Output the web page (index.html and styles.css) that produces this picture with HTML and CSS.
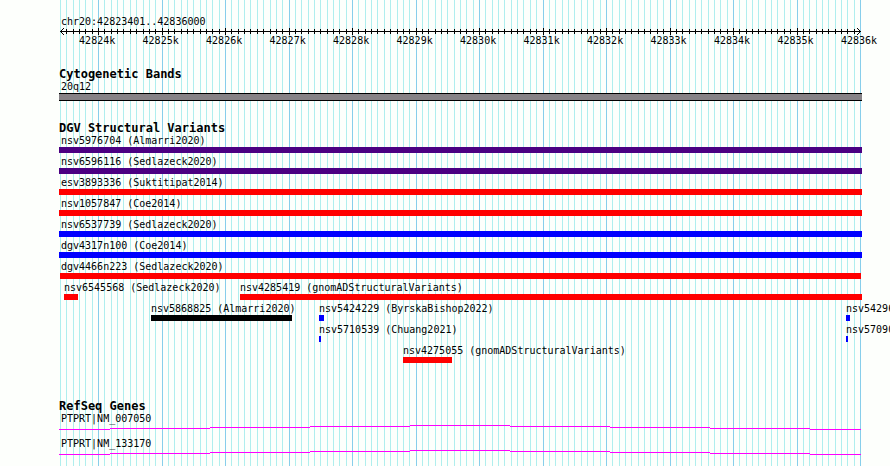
FILE: index.html
```
<!DOCTYPE html>
<html lang="en">

<head>
    <meta charset="UTF-8">
    <meta name="viewport" content="width=device-width, initial-scale=1.0">
    <title>chr20:42823401..42836000</title>
    <link rel="stylesheet" href="styles.css">
</head>

<body>
    <main class="plot">
        <svg class="grid" id="grid" aria-hidden="true"></svg>

        <header class="ruler">
            <p class="region">chr20:42823401..42836000</p>
            <svg class="axis" id="axis" aria-hidden="true">
                <rect x="0" y="3" width="100%" height="1" />
                <path class="arrow" d="M4 0L0.5 3.5L4 7" />
                <svg x="100%" overflow="visible">
                    <path class="arrow" d="M-3 0L0.5 3.5L-3 7" />
                </svg>
            </svg>
            <div class="scale" id="scale"></div>
        </header>

        <section class="track">
            <h2>Cytogenetic Bands</h2>
            <div class="row">
                <span class="label">20q12</span>
                <span class="bar band"></span>
            </div>
        </section>

        <section class="track variants">
            <h2>DGV Structural Variants</h2>
            <div class="row">
                <span class="label">nsv5976704 (Almarri2020)</span>
                <span class="bar complex"></span>
            </div>
            <div class="row">
                <span class="label">nsv6596116 (Sedlazeck2020)</span>
                <span class="bar complex"></span>
            </div>
            <div class="row">
                <span class="label">esv3893336 (Suktitipat2014)</span>
                <span class="bar loss"></span>
            </div>
            <div class="row">
                <span class="label">nsv1057847 (Coe2014)</span>
                <span class="bar loss"></span>
            </div>
            <div class="row">
                <span class="label">nsv6537739 (Sedlazeck2020)</span>
                <span class="bar gain"></span>
            </div>
            <div class="row">
                <span class="label">dgv4317n100 (Coe2014)</span>
                <span class="bar gain"></span>
            </div>
            <div class="row">
                <span class="label">dgv4466n223 (Sedlazeck2020)</span>
                <span class="bar loss" style="--start: 0%; --size: 100.125%"></span>
            </div>
            <div class="row">
                <span class="label" style="--start: 0.5%">nsv6545568 (Sedlazeck2020)</span>
                <span class="bar loss" style="--start: 0.5%; --size: 1.75%"></span>
                <span class="label" style="--start: 22.5%">nsv4285419 (gnomADStructuralVariants)</span>
                <span class="bar loss" style="--start: 22.5%; --size: 77.75%"></span>
            </div>
            <div class="row">
                <span class="label" style="--start: 11.375%">nsv5868825 (Almarri2020)</span>
                <span class="bar inversion" style="--start: 11.375%; --size: 17.625%"></span>
                <span class="label" style="--start: 32.375%">nsv5424229 (ByrskaBishop2022)</span>
                <span class="bar gain" style="--start: 32.375%; --size: 0.625%"></span>
                <span class="label" style="--start: 98.25%">nsv54296</span>
                <span class="bar gain" style="--start: 98.25%; --size: 0.5%"></span>
            </div>
            <div class="row">
                <span class="label" style="--start: 32.375%">nsv5710539 (Chuang2021)</span>
                <span class="bar gain" style="--start: 32.375%; --size: 0.25%"></span>
                <span class="label" style="--start: 98.25%">nsv57090</span>
                <span class="bar gain" style="--start: 98.25%; --size: 0.25%"></span>
            </div>
            <div class="row">
                <span class="label" style="--start: 42.875%">nsv4275055 (gnomADStructuralVariants)</span>
                <span class="bar loss" style="--start: 42.875%; --size: 6.125%"></span>
            </div>
        </section>

        <section class="track genes">
            <h2>RefSeq Genes</h2>
            <div class="row">
                <span class="label">PTPRT|NM_007050</span>
                <svg class="bar intron" viewBox="0 0 802 5" preserveAspectRatio="none" aria-hidden="true">
                    <path d="M0 4h51v1h-51zM51 3h100v1h-100zM151 2h100v1h-100zM251 1h100v1h-100zM351 0h100v1h-100zM451 1h100v1h-100zM551 2h100v1h-100zM651 3h100v1h-100zM751 4h51v1h-51z" />
                </svg>
            </div>
            <div class="row">
                <span class="label">PTPRT|NM_133170</span>
                <svg class="bar intron" viewBox="0 0 802 5" preserveAspectRatio="none" aria-hidden="true">
                    <path d="M0 4h51v1h-51zM51 3h100v1h-100zM151 2h100v1h-100zM251 1h100v1h-100zM351 0h100v1h-100zM451 1h100v1h-100zM551 2h100v1h-100zM651 3h100v1h-100zM751 4h51v1h-51z" />
                </svg>
            </div>
        </section>
    </main>
    <script>
        var start = 42823400;
        var end = 42836000;
        var grid = document.getElementById("grid");
        var axis = document.getElementById("axis");
        var scale = document.getElementById("scale");

        function addRect(svg, x, y, height, name) {
            var rect = document.createElementNS("http://www.w3.org/2000/svg", "rect");
            rect.setAttribute("x", x);
            rect.setAttribute("y", y);
            rect.setAttribute("width", 1);
            rect.setAttribute("height", height);
            rect.setAttribute("class", name);
            svg.appendChild(rect);
        }

        // one line every 100 bases, a labelled one every 1000
        for (var pos = start; pos <= end; pos += 100) {
            var x = (pos - start) / (end - start) * 100 + "%";
            var major = pos % 1000 == 0;
            addRect(grid, x, 0, "100%", major ? "major" : "minor");

            if (pos > start && pos < end) {
                addRect(axis, x, major ? 0 : 1, major ? 7 : 5, "tick");
            }
            if (major) {
                var label = document.createElement("span");
                label.textContent = pos / 1000 + "k";
                label.style.setProperty("--start", x);
                scale.appendChild(label);
            }
        }
    </script>
</body>

</html>
```
FILE: styles.css
```
* {
    margin: 0;
    padding: 0;
    box-sizing: border-box;
}

body {
    background-color: #fdfffc;
    color: #000;
    font: 10px/12px "DejaVu Sans Mono", "Liberation Mono", monospace;
    overflow-x: hidden;
}

.plot {
    position: relative;
    min-height: 100vh;
    margin: 0 30px 0 60px;
    padding-top: 16px;
}

/* guide lines behind all tracks */
.grid {
    position: absolute;
    top: 0;
    left: 0;
    z-index: -1;
    width: 100%;
    height: 100%;
    overflow: visible;
    shape-rendering: crispEdges;
}

.minor {
    fill: #afeeee;
}

.major {
    fill: #87ceeb;
}

.region {
    margin-left: 1px;
}

.axis {
    display: block;
    width: 100%;
    height: 7px;
    overflow: visible;
    shape-rendering: crispEdges;
}

.arrow {
    fill: none;
    stroke: #000;
}

.scale {
    display: grid;
}

.scale span {
    grid-area: 1 / 1;
    justify-self: start;
    width: 36px;
    margin-left: calc(var(--start) - 19px);
    white-space: nowrap;
}

.track {
    margin-top: 22px;
}

.track.genes {
    margin-top: 38px;
}

h2 {
    margin-left: -1px;
    padding-bottom: 2px;
    font-size: 12px;
    line-height: 10px;
}

.row {
    display: grid;
    grid-template-columns: minmax(0, 1fr);
}

.variants .row + .row {
    margin-top: 3px;
}

.genes .row + .row {
    margin-top: 8px;
}

.label {
    grid-area: 1 / 1;
    margin-left: var(--start, 1px);
    white-space: nowrap;
}

/* bars without a start run past both ends of the region */
.bar {
    grid-area: 2 / 1;
    width: var(--size, calc(100% + 3px));
    height: 6px;
    margin-left: var(--start, -1px);
}

.band {
    height: 8px;
    background-color: #868286;
    border: solid #000;
    border-width: 1px 0;
}

.complex {
    background-color: #4b0082;
}

.loss {
    background-color: #f00;
}

.gain {
    background-color: #00f;
}

.inversion {
    background-color: #000;
}

.intron {
    width: calc(100% + 2px);
    height: 5px;
    fill: #f0f;
    shape-rendering: crispEdges;
}
```
